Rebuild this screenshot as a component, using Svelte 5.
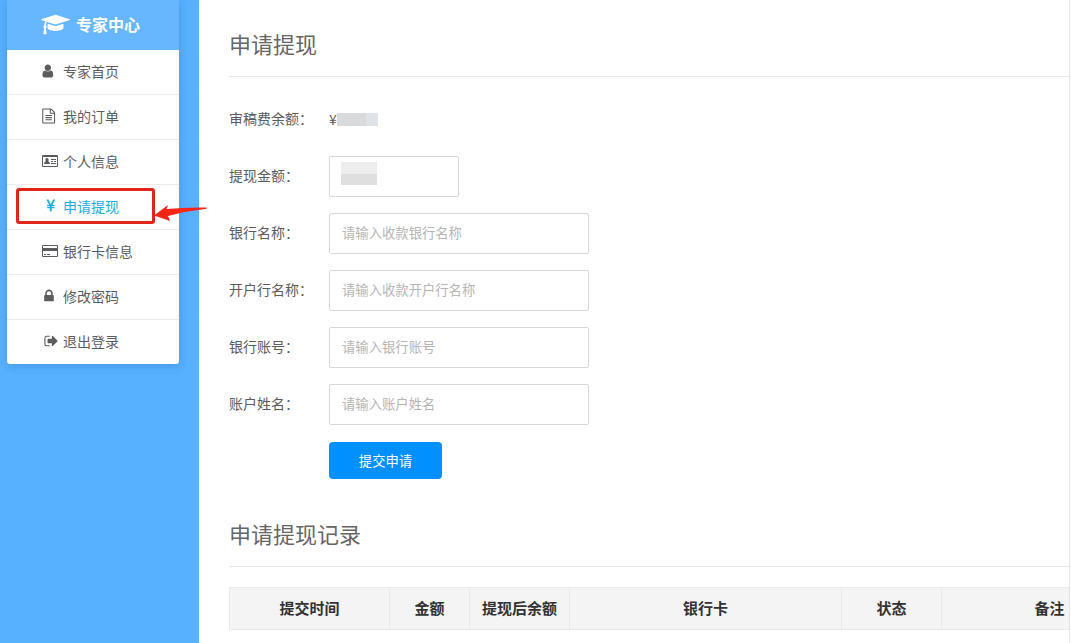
<script lang="ts">
  const menu = [
    { icon: "user", text: "专家首页" },
    { icon: "file", text: "我的订单" },
    { icon: "idcard", text: "个人信息" },
    { icon: "yen", text: "申请提现", active: true },
    { icon: "card", text: "银行卡信息" },
    { icon: "lock", text: "修改密码" },
    { icon: "signout", text: "退出登录" },
  ];

  // every icon is drawn in the same 16px box
  const icons: Record<string, { box: string; d: string }> = {
    user: {
      box: "200 -60 1912 1912",
      d: "M1536 1399q0 109-62.5 187t-150.5 78h-854q-88 0-150.5-78t-62.5-187q0-85 8.5-160.5t31.5-152 58.5-131 94-89 134.5-34.5q131 128 313 128t313-128q76 0 134.5 34.5t94 89 58.5 131 31.5 152 8.5 160.5zm-256-887q0 159-112.5 271.5t-271.5 112.5-271.5-112.5-112.5-271.5 112.5-271.5 271.5-112.5 271.5 112.5 112.5 271.5z",
    },
    file: {
      box: "100 -60 1912 1912",
      d: "M1596 380q28 28 48 76t20 88v1152q0 40-28 68t-68 28h-1344q-40 0-68-28t-28-68v-1600q0-40 28-68t68-28h896q40 0 88 20t76 48zm-444-244v376h376q-10-29-22-41l-313-313q-12-12-41-22zm384 1528v-1024h-416q-40 0-68-28t-28-68v-416h-768v1536h1280zm-1024-864q0-14 9-23t23-9h704q14 0 23 9t9 23v64q0 14-9 23t-23 9h-704q-14 0-23-9t-9-23v-64zm736 224q14 0 23 9t9 23v64q0 14-9 23t-23 9h-704q-14 0-23-9t-9-23v-64q0-14 9-23t23-9h704zm0 256q14 0 23 9t9 23v64q0 14-9 23t-23 9h-704q-14 0-23-9t-9-23v-64q0-14 9-23t23-9h704z",
    },
    idcard: {
      box: "0 0 16 16",
      d: "M1 2h14q1 0 1 1v10q0 1-1 1h-14q-1 0-1-1v-10q0-1 1-1zM1 4v9h14v-9zM5 5a1.700 1.900 0 0 1 1.200 3.200q1.800 .4 1.800 2.800h-6q0-2.400 1.800-2.800a1.700 1.900 0 0 1 1.200-3.200zM9 6h5v1h-5zM9 8h2v1h-2zM12 8h2v1h-2zM9 10h5v1h-5z",
    },
    yen: {
      box: "-150 -60 1912 1912",
      d: "M985.5 1536h-172q-13 0-22.5-9t-9.5-23v-330h-288q-13 0-22.5-9t-9.5-23v-103q0-13 9.5-22.5t22.5-9.5h288v-85h-288q-13 0-22.5-9t-9.5-23v-104q0-13 9.5-22.5t22.5-9.5h214l-321-578q-8-16 0-32 10-16 28-16h194q19 0 29 18l215 425q19 38 56 125 10-24 30.5-68t27.5-61l191-420q8-19 29-19h191q17 0 27 16 9 14 1 31l-313 579h215q13 0 22.5 9.5t9.5 22.5v104q0 14-9.5 23t-22.5 9h-290v85h290q13 0 22.5 9.5t9.5 22.5v103q0 14-9.5 23t-22.5 9h-290v330q0 13-9.5 22.5t-22.5 9.5z",
    },
    card: {
      box: "0 0 16 16",
      d: "M1 2h14q1 0 1 1v10q0 1-1 1h-14q-1 0-1-1v-10q0-1 1-1zM1 3v2h14v-2zM1 8v5h14v-5zM2 11h2v1h-2zM5 11h3v1h-3z",
    },
    lock: {
      box: "60 -60 1912 1912",
      d: "M640 768h512v-192q0-106-75-181t-181-75-181 75-75 181v192zm832 96v576q0 40-28 68t-68 28h-960q-40 0-68-28t-28-68v-576q0-40 28-68t68-28h32v-192q0-184 132-316t316-132 316 132 132 316v192h32q40 0 68 28t28 68z",
    },
    signout: {
      box: "-220 -60 1912 1912",
      d: "M704 1440q0 4 1 20t.5 26.5-3 23.5-10 19.5-20.5 6.5h-320q-119 0-203.5-84.5t-84.5-203.5v-704q0-119 84.5-203.5t203.5-84.5h320q13 0 22.5 9.5t9.5 22.5q0 4 1 20t.5 26.5-3 23.5-10 19.5-20.5 6.5h-320q-66 0-113 47t-47 113v704q0 66 47 113t113 47h312l11.5 1 11.5 3 8 5.5 7 9 2 13.5zm928-544q0 26-19 45l-544 544q-19 19-45 19t-45-19-19-45v-288h-448q-26 0-45-19t-19-45v-384q0-26 19-45t45-19h448v-288q0-26 19-45t45-19 45 19l544 544q19 19 19 45z",
    },
  };

  const fields = [
    { id: "bank", label: "银行名称：", hint: "请输入收款银行名称" },
    { id: "branch", label: "开户行名称：", hint: "请输入收款开户行名称" },
    { id: "account", label: "银行账号：", hint: "请输入银行账号" },
    { id: "owner", label: "账户姓名：", hint: "请输入账户姓名" },
  ];

  const columns = [
    { name: "提交时间", width: 160 },
    { name: "金额", width: 80 },
    { name: "提现后余额", width: 100 },
    { name: "银行卡", width: 272 },
    { name: "状态", width: 100 },
    { name: "备注", width: 216 },
  ];
</script>

<div class="page">
  <aside>
    <nav>
      <h1>
        <svg class="cap" viewBox="0 0 2304 1792">
          <path
            d="M1774 836l18 316q4 69-82 128t-235 93.5-323 34.5-323-34.5-235-93.5-82-128l18-316 574 181q22 7 48 7t48-7zm530-324q0 23-22 31l-1120 352q-4 1-10 1t-10-1l-652-206q-43 34-71 111.5t-34 178.5q63 36 63 109 0 69-58 107l58 433q2 14-8 25-9 11-24 11h-192q-15 0-24-11-10-11-8-25l58-433q-58-38-58-107 0-73 65-111 11-207 98-330l-333-104q-22-8-22-31t22-31l1120-352q4-1 10-1t10 1l1120 352q22 8 22 31z"
          />
        </svg>
        专家中心
      </h1>
      <ul>
        {#each menu as item}
          <li>
            <a href="#{item.icon}" class:active={item.active}>
              <svg class="icon" viewBox={icons[item.icon].box}>
                <path fill-rule="evenodd" d={icons[item.icon].d} />
              </svg>
              {item.text}
            </a>
            {#if item.active}
              <div class="mark"></div>
              <svg class="arrow" viewBox="0 0 54 20">
                <path d="M0 11.500L14 1L12.500 5Q32 3 52 3.500Q54 4.500 51 5Q32 7 14 12L16 17Z" />
              </svg>
            {/if}
          </li>
        {/each}
      </ul>
    </nav>
  </aside>

  <main>
    <h2>申请提现</h2>
    <form>
      <div class="row">
        <span class="label">审稿费余额：</span>
        <span class="balance">¥<span class="mosaic"></span></span>
      </div>
      <div class="row">
        <label for="amount">提现金额：</label>
        <input id="amount" class="short" type="text" />
      </div>
      {#each fields as field}
        <div class="row">
          <label for={field.id}>{field.label}</label>
          <input id={field.id} type="text" placeholder={field.hint} />
        </div>
      {/each}
      <button type="button">提交申请</button>
    </form>

    <h2>申请提现记录</h2>
    <table>
      <thead>
        <tr>
          {#each columns as col}
            <th style="width: {col.width}px">{col.name}</th>
          {/each}
        </tr>
      </thead>
    </table>
  </main>
</div>

<style>
  :global(body) {
    margin: 0;
    overflow: hidden;
    background: #fff;
  }
  .page {
    display: flex;
    min-height: 100vh;
    color: #5c5c5c;
    font-family: "Noto Sans CJK SC", sans-serif;
    font-size: 14px;
    line-height: 20px;
  }
  h1,
  h2,
  ul {
    margin: 0;
    padding: 0;
    list-style: none;
  }

  /* sidebar */
  aside {
    flex: 0 0 172px;
    padding: 0 20px 0 7px;
    background: #57b1ff;
  }
  nav {
    border-radius: 0 0 3px 3px;
    background: #fff;
    box-shadow: 0 2px 10px rgba(0, 50, 110, 0.2);
  }
  h1 {
    display: flex;
    align-items: center;
    gap: 6px;
    height: 48px;
    padding: 0 0 2px 34px;
    background: #66b7ff;
    color: #fff;
    font-size: 16px;
  }
  .cap {
    width: 29px;
    height: 23px;
    fill: #fff;
  }
  li {
    position: relative;
    border-bottom: 1px solid #ebebeb;
  }
  li:last-child {
    border-bottom: 0;
  }
  a {
    display: flex;
    align-items: center;
    gap: 5px;
    height: 42px;
    padding: 0 0 2px 35px;
    color: #5c5c5c;
    text-decoration: none;
  }
  .icon {
    width: 16px;
    height: 16px;
    fill: currentColor;
  }
  .active {
    color: #23ade5;
  }
  .mark {
    position: absolute;
    top: 3px;
    left: 9px;
    box-sizing: border-box;
    width: 139px;
    height: 36px;
    border: 3px solid #e1251b;
    border-radius: 3px;
  }
  .arrow {
    position: absolute;
    top: 19px;
    left: 147px;
    z-index: 1;
    width: 54px;
    height: 20px;
    fill: #fb2517;
  }

  /* content */
  main {
    flex: 1;
    min-width: 0;
    margin-right: 1px;
    padding-left: 30px;
    border-right: 1px solid #e4e4e4;
    overflow: hidden;
  }
  h2 {
    padding: 28px 0 18px;
    border-bottom: 1px solid #e8e8e8;
    color: #666;
    font-size: 22px;
    font-weight: 400;
    line-height: 30px;
  }
  form {
    padding: 22px 0 11px;
  }
  .row {
    display: flex;
    align-items: center;
    height: 41px;
    margin-bottom: 16px;
  }
  label,
  .label {
    width: 100px;
    padding-bottom: 3px;
  }
  .balance {
    display: flex;
    align-items: center;
    padding-bottom: 1px;
  }
  .mosaic {
    width: 41px;
    height: 13px;
    background: linear-gradient(90deg, #d9dadb 70%, #dfe3e8 70%);
  }
  input {
    box-sizing: border-box;
    width: 260px;
    height: 41px;
    padding: 0 12px 2px;
    border: 1px solid #d8d8d8;
    border-radius: 2px;
    font-family: inherit;
    color: #555;
  }
  input::placeholder {
    color: #b5b5b5;
  }
  .short {
    width: 130px;
    background: linear-gradient(#ededed 50%, #dfdfe0 50%) 11px 5px / 36px 23px no-repeat;
  }
  button {
    display: block;
    width: 113px;
    height: 37px;
    margin: 17px 0 0 100px;
    border: 0;
    border-radius: 4px;
    background: #0090ff;
    color: #fff;
    font-family: inherit;
  }

  table {
    width: 929px;
    margin-top: 20px;
    border-collapse: collapse;
    table-layout: fixed;
  }
  th {
    box-sizing: border-box;
    height: 42px;
    padding: 0 0 2px;
    border: 1px solid #e9e9e9;
    background: #f4f4f4;
    color: #333;
    font-size: 15px;
  }
</style>
